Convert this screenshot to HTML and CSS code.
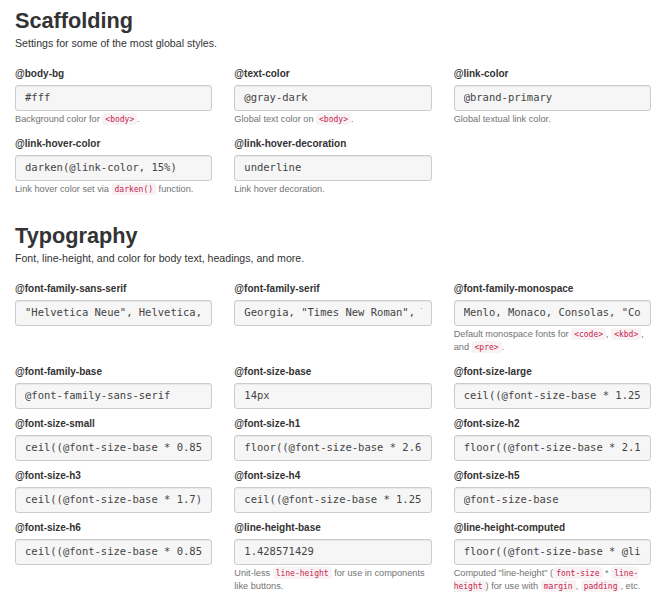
FILE: index.html
```html
<!DOCTYPE html>
<html>
<head>
<meta charset="utf-8">
<link rel="stylesheet" href="styles.css">
</head>
<body>
<div class="page">
  <section class="section">
    <h1 class="title">Scaffolding</h1>
    <p class="lead">Settings for some of the most global styles.</p>
    <div class="grid">
      <div class="group">
        <div class="label">@body-bg</div>
        <div class="field"><span class="value">#fff</span></div>
        <p class="help">Background color for <code>&lt;body&gt;</code>.</p>
      </div>
      <div class="group">
        <div class="label">@text-color</div>
        <div class="field"><span class="value">@gray-dark</span></div>
        <p class="help">Global text color on <code>&lt;body&gt;</code>.</p>
      </div>
      <div class="group">
        <div class="label">@link-color</div>
        <div class="field"><span class="value">@brand-primary</span></div>
        <p class="help">Global textual link color.</p>
      </div>
      <div class="group">
        <div class="label">@link-hover-color</div>
        <div class="field"><span class="value">darken(@link-color, 15%)</span></div>
        <p class="help">Link hover color set via <code>darken()</code> function.</p>
      </div>
      <div class="group">
        <div class="label">@link-hover-decoration</div>
        <div class="field"><span class="value">underline</span></div>
        <p class="help">Link hover decoration.</p>
      </div>
    </div>
  </section>

  <section class="section">
    <h1 class="title">Typography</h1>
    <p class="lead">Font, line-height, and color for body text, headings, and more.</p>
    <div class="grid">
      <div class="group">
        <div class="label">@font-family-sans-serif</div>
        <div class="field"><span class="value">"Helvetica Neue", Helvetica, Arial, sans-serif</span></div>
      </div>
      <div class="group">
        <div class="label">@font-family-serif</div>
        <div class="field"><span class="value">Georgia, "Times New Roman", Times, serif</span></div>
      </div>
      <div class="group">
        <div class="label">@font-family-monospace</div>
        <div class="field"><span class="value">Menlo, Monaco, Consolas, "Courier New", monospace</span></div>
        <p class="help">Default monospace fonts for <code>&lt;code&gt;</code>, <code>&lt;kbd&gt;</code>, and <code>&lt;pre&gt;</code>.</p>
      </div>

      <div class="group">
        <div class="label">@font-family-base</div>
        <div class="field"><span class="value">@font-family-sans-serif</span></div>
      </div>
      <div class="group">
        <div class="label">@font-size-base</div>
        <div class="field"><span class="value">14px</span></div>
      </div>
      <div class="group">
        <div class="label">@font-size-large</div>
        <div class="field"><span class="value">ceil((@font-size-base * 1.25)) // ~18px</span></div>
      </div>

      <div class="group">
        <div class="label">@font-size-small</div>
        <div class="field"><span class="value">ceil((@font-size-base * 0.85)) // ~12px</span></div>
      </div>
      <div class="group">
        <div class="label">@font-size-h1</div>
        <div class="field"><span class="value">floor((@font-size-base * 2.6)) // ~36px</span></div>
      </div>
      <div class="group">
        <div class="label">@font-size-h2</div>
        <div class="field"><span class="value">floor((@font-size-base * 2.15)) // ~30px</span></div>
      </div>

      <div class="group">
        <div class="label">@font-size-h3</div>
        <div class="field"><span class="value">ceil((@font-size-base * 1.7)) // ~24px</span></div>
      </div>
      <div class="group">
        <div class="label">@font-size-h4</div>
        <div class="field"><span class="value">ceil((@font-size-base * 1.25)) // ~18px</span></div>
      </div>
      <div class="group">
        <div class="label">@font-size-h5</div>
        <div class="field"><span class="value">@font-size-base</span></div>
      </div>

      <div class="group">
        <div class="label">@font-size-h6</div>
        <div class="field"><span class="value">ceil((@font-size-base * 0.85)) // ~12px</span></div>
      </div>
      <div class="group">
        <div class="label">@line-height-base</div>
        <div class="field"><span class="value">1.428571429</span></div>
        <p class="help">Unit-less <code>line-height</code> for use in components like buttons.</p>
      </div>
      <div class="group">
        <div class="label">@line-height-computed</div>
        <div class="field"><span class="value">floor((@font-size-base * @line-height-base))</span></div>
        <p class="help">Computed "line-height" (<code>font-size</code> * <code>line-height</code>) for use with <code>margin</code>, <code>padding</code>, etc.</p>
      </div>
    </div>
  </section>
</div>
</body>
</html>
```

FILE: styles.css
```css
html, body {
  margin: 0;
  padding: 0;
  background: #fff;
}

body {
  font-family: "Liberation Sans", Arial, sans-serif;
  color: #333;
  font-size: 10.5px;
}

.page {
  width: 636px;
  padding: 9px 0 0 15px;
}

.section + .section {
  margin-top: 18px;
}

.title {
  margin: 0;
  font-size: 21.7px;
  line-height: 24px;
  font-weight: bold;
  color: #333;
}

.lead {
  margin: 2.5px 0 0;
  font-size: 10.6px;
  line-height: 15px;
  color: #333;
}

.grid {
  margin-top: 15.5px;
  display: grid;
  grid-template-columns: repeat(3, 1fr);
  column-gap: 22px;
}

.group {
  margin-bottom: 7.5px;
  min-width: 0;
}

.label {
  font-size: 10px;
  line-height: 15px;
  font-weight: bold;
  color: #333;
  margin-bottom: 4px;
}

.field {
  box-sizing: border-box;
  height: 25.5px;
  padding: 0 9px;
  border: 1px solid #ccc;
  border-radius: 3px;
  background: #f6f6f6;
  box-shadow: inset 0 1px 1px rgba(0, 0, 0, 0.06);
}

.value {
  display: block;
  font-family: "DejaVu Sans Mono", "Liberation Mono", monospace;
  font-size: 10.5px;
  line-height: 23.5px;
  color: #444;
  white-space: pre;
  overflow: hidden;
}

.help {
  margin: 2px 0 3px;
  font-size: 9.2px;
  line-height: 13px;
  color: #737373;
}

.help code {
  font-family: "DejaVu Sans Mono", "Liberation Mono", monospace;
  font-size: 8px;
  line-height: 1;
  color: #c7254e;
  background: #f9f2f4;
  padding: 1.5px 3px;
  border-radius: 3px;
}
```
